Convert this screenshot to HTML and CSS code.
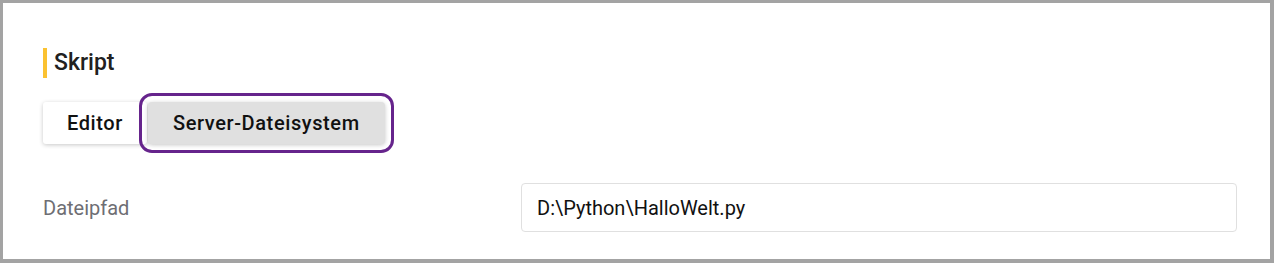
FILE: index.html
```html
<!DOCTYPE html>
<html lang="de">
<head>
<meta charset="utf-8">
<title>Skript</title>
<link rel="stylesheet" href="styles.css">
</head>
<body>
<div class="frame">
  <section class="panel">
    <h2 class="title">Skript</h2>
    <div class="tabs">
      <button class="tab">Editor</button>
      <button class="tab tab-active">Server-Dateisystem</button>
    </div>
    <div class="row">
      <label class="label" for="path">Dateipfad</label>
      <input class="input" id="path" type="text" value="D:\Python\HalloWelt.py">
    </div>
  </section>
</div>
</body>
</html>
```
FILE: styles.css
```css
* { box-sizing: border-box; }
html, body { margin: 0; padding: 0; background: #ffffff; }
body { font-family: Roboto, "Liberation Sans", sans-serif; }

.frame {
  width: 1274px;
  height: 263px;
  border-style: solid;
  border-color: #a3a3a3;
  border-width: 3px 4px 4px 3px;
  background: #fff;
}

.panel {
  padding: 45px 33px 0 40px;
}

.title {
  margin: 0;
  height: 30px;
  border-left: 4px solid #fbc231;
  padding-left: 7px;
  font-size: 23px;
  font-weight: 500;
  line-height: 30px;
  color: #212121;
}

.tabs {
  display: flex;
  gap: 1px;
  margin-top: 24px;
}

.tab {
  height: 42px;
  padding: 0 24px;
  border: 0;
  border-radius: 3px;
  background: #ffffff;
  box-shadow: 0 1px 4px rgba(0, 0, 0, 0.22);
  font-family: Roboto, "Liberation Sans", sans-serif;
  font-size: 20px;
  font-weight: 500;
  letter-spacing: 0.6px;
  color: #111;
  cursor: pointer;
}

.tab-active {
  background: #e0e0e0;
  padding: 0 25px;
  outline: 3px solid #66248c;
  outline-offset: 6px;
  border-radius: 4px;
}

.row {
  display: grid;
  grid-template-columns: 478px 1fr;
  align-items: center;
  margin-top: 39px;
}

.label {
  font-size: 20px;
  color: #6e6e73;
}

.input {
  height: 49px;
  width: 100%;
  border: 1px solid #e0e0e0;
  border-radius: 4px;
  padding: 0 15px;
  font-family: Roboto, "Liberation Sans", sans-serif;
  font-size: 20px;
  color: #111;
  outline: none;
}
```
